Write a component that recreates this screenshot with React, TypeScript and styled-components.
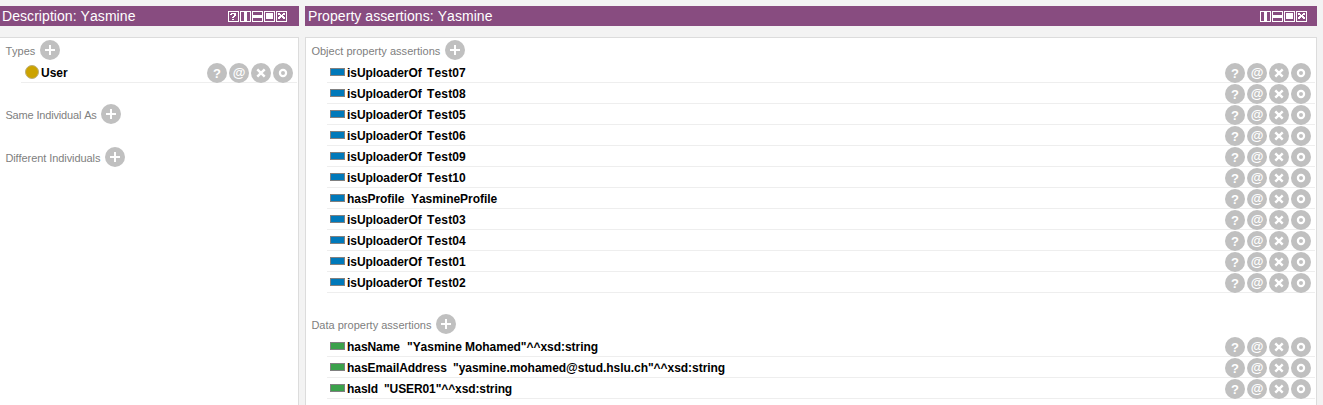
import React from 'react';
import styled, { createGlobalStyle } from 'styled-components';

const GlobalStyle = createGlobalStyle`
  * { box-sizing: border-box; }
  body { margin: 0; background: #f3f3f3; font-family: "Liberation Sans", Arial, sans-serif; font-kerning: none; overflow: hidden; }
`;

const Workspace = styled.main`
  display: flex;
  gap: 6px;
  height: 405px;
  padding: 6px 6px 0 0;
`;

const Panel = styled.section<{ $width?: number }>`
  display: flex;
  flex-direction: column;
  flex: ${(p) => (p.$width ? `0 0 ${p.$width}px` : '1')};
  min-width: 0;
`;

const TitleBar = styled.header<{ $inset: number; $end: number }>`
  display: flex;
  align-items: center;
  justify-content: space-between;
  height: 20px;
  flex-shrink: 0;
  padding: 0 ${(p) => p.$end}px 0 ${(p) => p.$inset}px;
  background: #884c80;
  color: #fff;
`;

const Title = styled.h1`
  margin: 0;
  font-size: 14px;
  font-weight: 400;
  line-height: 20px;
  letter-spacing: 0.06px;
  white-space: pre;
`;

const WindowButtons = styled.div`
  display: flex;
  gap: 1px;
  height: 11px;
`;

const Body = styled.div<{ $leftEdge: boolean }>`
  flex: 1;
  min-height: 0;
  margin-top: 11px;
  padding: 2px 1px 0 5px;
  background: #fff;
  border: 1px solid #dcdcdc;
  border-bottom: 0;
  border-left-width: ${(p) => (p.$leftEdge ? 1 : 0)}px;
`;

const Section = styled.div`
  margin-bottom: 21px;
`;

const SectionHead = styled.div`
  display: flex;
  height: 22px;
`;

const SectionLabel = styled.span<{ $width: number; $tracking: number }>`
  width: ${(p) => p.$width}px;
  padding-left: 0.4px;
  font-size: 11px;
  line-height: 22px;
  color: #808080;
  white-space: pre;
  letter-spacing: ${(p) => p.$tracking}px;
`;

const Row = styled.div`
  display: flex;
  align-items: flex-start;
  height: 21px;
  margin-left: 16px;
  border-bottom: 1px solid #eee;
`;

const Swatch = styled.span<{ $color: string }>`
  width: 15px;
  height: 8px;
  margin: 6px 2px 0 3px;
  background: ${(p) => p.$color};
  border: 1px solid #808080;
`;

const ClassDot = styled.span`
  width: 14px;
  height: 14px;
  margin: 3px 2px 0 4px;
  border-radius: 50%;
  background: #cca300;
  border: 1px solid #bdae78;
`;

const Term = styled.span<{ $width?: number; $tracking?: number }>`
  width: ${(p) => (p.$width ? `${p.$width}px` : 'auto')};
  font-size: 12px;
  font-weight: 700;
  line-height: 22px;
  color: #000;
  white-space: pre;
  letter-spacing: ${(p) => p.$tracking ?? 0}px;
`;

const Actions = styled.div`
  display: flex;
  gap: 2px;
  margin: 1px 4px 0 auto;
`;

const Disc = styled.span`
  display: flex;
  align-items: center;
  justify-content: center;
  width: 20px;
  height: 20px;
  border-radius: 50%;
  background: #c0c0c0;
  color: #fff;
`;

const Glyph = styled.span<{ $size: number; $drop: number }>`
  font-size: ${(p) => p.$size}px;
  font-weight: 700;
  line-height: 20px;
  padding-top: ${(p) => p.$drop}px;
`;

type WindowIcon = 'help' | 'columns' | 'rows' | 'max' | 'close';

const windowPaths: Record<WindowIcon, string> = {
  help: 'M3 2h5v1H3zM2 3h2v1H2zM6 3h2v2H6zM5 5h2v1H5zM4 6h2v1H4zM4 8h2v1H4z',
  columns: 'M4 1h3v9H4z',
  rows: 'M1 4h9v3H1z',
  max: 'M2 2h7v6H2z',
  close: 'M2 2h2v1H2zM7 2h2v1H7zM2 3h3v1H2zM6 3h3v1H6zM4 4h3v2H4zM3 5h5v1H3zM2 6h3v1H2zM6 6h3v1H6zM2 7h2v1H2zM7 7h2v1H7z',
};

const WindowButton = ({ icon }: { icon: WindowIcon }) => (
  <svg width="11" height="11" viewBox="0 0 11 11" shapeRendering="crispEdges" fill="#fff">
    <path fillRule="evenodd" d="M0 0h11v11H0zM1 1v9h9V1z" />
    <path d={windowPaths[icon]} />
  </svg>
);

const AddButton = () => (
  <Disc>
    <svg width="20" height="20" viewBox="0 0 20 20">
      <path d="M10 5v10M5 10h10" stroke="#fff" strokeWidth="2" />
    </svg>
  </Disc>
);

const RowActions = () => (
  <Actions>
    <Disc><Glyph $size={13} $drop={2}>?</Glyph></Disc>
    <Disc><Glyph $size={13} $drop={0}>@</Glyph></Disc>
    <Disc>
      <svg width="20" height="20" viewBox="0 0 20 20">
        <path d="M6.3 6.3l7.4 7.4M13.7 6.3l-7.4 7.4" stroke="#fff" strokeWidth="2.4" />
      </svg>
    </Disc>
    <Disc>
      <svg width="20" height="20" viewBox="0 0 20 20">
        <circle cx="10" cy="10" r="3.1" fill="none" stroke="#fff" strokeWidth="2.2" />
      </svg>
    </Disc>
  </Actions>
);

const Head = ({ label, width, tracking = 0 }: { label: string; width: number; tracking?: number }) => (
  <SectionHead>
    <SectionLabel $width={width} $tracking={tracking}>{label}</SectionLabel>
    <AddButton />
  </SectionHead>
);

interface Assertion {
  property: string;
  value: string;
  width: number;
  tracking?: number;
}

const PropertyRow = ({ item, color }: { item: Assertion; color: string }) => (
  <Row>
    <Swatch $color={color} />
    <Term $width={item.width} $tracking={-0.06}>{item.property + '  '}</Term>
    <Term $tracking={item.tracking}>{item.value}</Term>
    <RowActions />
  </Row>
);

const uploads = (ids: string[]): Assertion[] =>
  ids.map((id) => ({ property: 'isUploaderOf', value: `Test${id}`, width: 80, tracking: 0.15 }));

const objectAssertions: Assertion[] = [
  ...uploads(['07', '08', '05', '06', '09', '10']),
  { property: 'hasProfile', value: 'YasmineProfile', width: 64, tracking: -0.04 },
  ...uploads(['03', '04', '01', '02']),
];

const dataAssertions: Assertion[] = [
  { property: 'hasName', value: '"Yasmine Mohamed"^^xsd:string', width: 60, tracking: -0.035 },
  { property: 'hasEmailAddress', value: '"yasmine.mohamed@stud.hslu.ch"^^xsd:string', width: 106, tracking: -0.04 },
  { property: 'hasId', value: '"USER01"^^xsd:string', width: 37, tracking: -0.1 },
];

const paneIcons: WindowIcon[] = ['columns', 'rows', 'max', 'close'];

export default function App() {
  return (
    <>
      <GlobalStyle />
      <Workspace>
        <Panel $width={299}>
          <TitleBar $inset={2} $end={12}>
            <Title>Description: Yasmine</Title>
            <WindowButtons>
              <WindowButton icon="help" />
              {paneIcons.map((i) => <WindowButton key={i} icon={i} />)}
            </WindowButtons>
          </TitleBar>
          <Body $leftEdge={false}>
            <Section>
              <Head label="Types" width={35} />
              <Row>
                <ClassDot />
                <Term>User</Term>
                <RowActions />
              </Row>
            </Section>
            <Section><Head label="Same Individual As" width={96} tracking={-0.16} /></Section>
            <Section><Head label="Different Individuals" width={100} tracking={-0.08} /></Section>
          </Body>
        </Panel>
        <Panel>
          <TitleBar $inset={3} $end={10}>
            <Title>Property assertions: Yasmine</Title>
            <WindowButtons>
              {paneIcons.map((i) => <WindowButton key={i} icon={i} />)}
            </WindowButtons>
          </TitleBar>
          <Body $leftEdge>
            <Section>
              <Head label="Object property assertions" width={134} tracking={0.02} />
              {objectAssertions.map((a) => <PropertyRow key={a.value} item={a} color="#0079ba" />)}
            </Section>
            <Section>
              <Head label="Data property assertions" width={125} tracking={0.01} />
              {dataAssertions.map((a) => <PropertyRow key={a.value} item={a} color="#3ba14b" />)}
            </Section>
          </Body>
        </Panel>
      </Workspace>
    </>
  );
}
